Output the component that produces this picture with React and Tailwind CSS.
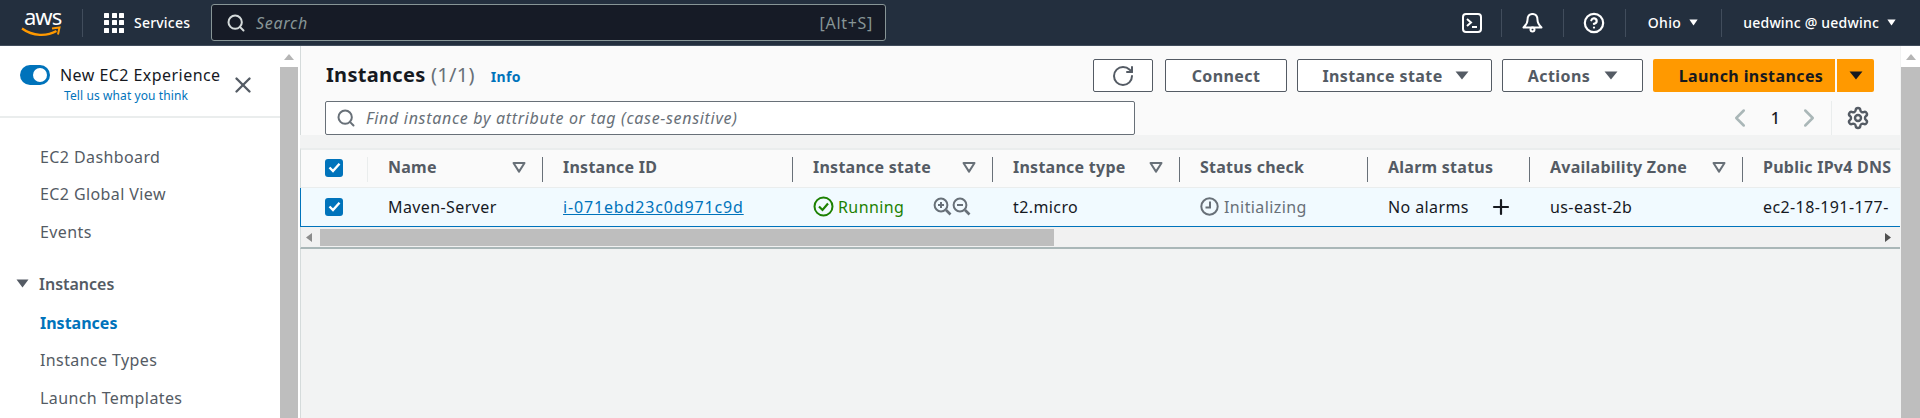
import React from "react";
import { CircleHelp, RotateCw, ChevronLeft, ChevronRight, Settings, Search, X, Plus } from "lucide-react";

const Caret = ({ className = "", w = 14, h = 9, color = "currentColor" }) => (
  <svg width={w} height={h} viewBox="0 0 13 8" preserveAspectRatio="none" className={className}>
    <path d="M0.5 0.5H12.5L6.5 7.5Z" fill={color} />
  </svg>
);

const Filter = () => (
  <svg width="14" height="11" viewBox="0 0 14 11">
    <path d="M1.5 1H12.5L7 9.6Z" fill="none" stroke="#687078" strokeWidth="2" strokeLinejoin="round" />
  </svg>
);

const Check = () => (
  <div className="w-[18px] h-[18px] rounded-[3px] bg-[#0073bb] flex items-center justify-center">
    <svg width="13" height="11" viewBox="0 0 13 11">
      <path d="M1.5 5.5L5 9L11.5 1.8" fill="none" stroke="#fff" strokeWidth="2.4" />
    </svg>
  </div>
);

const NavSep = () => <div className="w-px h-[28px] bg-[#414d5c]" />;

const Zoom = ({ plus }) => (
  <svg width="19" height="19" viewBox="0 0 19 19" fill="none" stroke="#687078" strokeWidth="2">
    <circle cx="8" cy="8" r="6.4" />
    <path d="M13 13L17.5 17.5" strokeWidth="2.6" />
    <path d="M5 8H11" />
    {plus && <path d="M8 5V11" />}
  </svg>
);

const Btn = ({ w, children, cls = "" }) => (
  <button className={`h-[33px] rounded-[2px] border border-[#545b64] bg-white flex items-center justify-center text-[#545b64] text-[16px] tracking-[0.4px] font-bold ${w} ${cls}`}>
    {children}
  </button>
);

const COLS = "grid grid-cols-[67px_175px_250px_200px_187px_188px_162px_213px_1fr]";

const Head = ({ label, filter, sep = "bg-[#687078]" }) => (
  <div className="relative h-full flex items-center pl-[20px] pr-[17px] justify-between text-[16px] tracking-[0.25px] font-bold text-[#545b64] whitespace-nowrap">
    <span className="-mt-[3px]">{label}</span>
    {filter && <span className="flex -mt-[2px]"><Filter /></span>}
    {sep && <span className={`absolute right-0 top-[7px] h-[25px] w-px ${sep}`} />}
  </div>
);

const Cell = ({ children, cls = "" }) => (
  <div className={`h-full flex items-center pl-[20px] text-[16px] tracking-[0.4px] text-[#16191f] whitespace-nowrap overflow-hidden ${cls}`}>{children}</div>
);

const SideItem = ({ children, cls = "" }) => (
  <div className={`h-[37.6px] flex items-center pl-[40px] text-[16px] tracking-[0.4px] text-[#545b64] ${cls}`}>{children}</div>
);

const VScroll = ({ w }) => (
  <div className={`${w} shrink-0 flex flex-col items-center`}>
    <div className="h-[21px] flex items-center justify-center">
      <svg width="10" height="6" viewBox="0 0 10 6"><path d="M0 6H10L5 0Z" fill="#b5b5b5" /></svg>
    </div>
    <div className="flex-1 w-full bg-[#bebebe]" />
  </div>
);

export default function App() {
  return (
    <div className="w-[1920px] h-[418px] overflow-hidden flex flex-col bg-white font-['Noto_Sans',sans-serif]">
      <header className="h-[46px] shrink-0 bg-[#232f3e] border-b border-[#414d5c] flex items-center text-white">
        <div className="w-[82px] shrink-0 flex justify-center">
          <div className="relative w-[40px] h-[32px] -mt-[3px]">
            <span className="absolute left-[3px] top-[-4px] text-[22px] leading-[30px] tracking-[-1px] text-white">aws</span>
            <svg width="40" height="12" viewBox="0 0 40 12" className="absolute left-[0px] top-[21px]">
              <path d="M1 2.5C12 10.5 26 10.5 35.5 5" fill="none" stroke="#f90" strokeWidth="2.2" />
              <path d="M31 2.5L38.5 1.5L37 8.5" fill="none" stroke="#f90" strokeWidth="2" />
            </svg>
          </div>
        </div>
        <NavSep />
        <div className="grid grid-cols-3 gap-[2.5px] ml-[21px] w-[20px]">
          {Array.from({ length: 9 }).map((_, i) => (
            <span key={i} className="w-[5px] h-[5px] bg-white rounded-[0.5px]" />
          ))}
        </div>
        <span className="ml-[10px] text-[14px] font-medium tracking-[0.2px] w-[77px]">Services</span>
        <div className="w-[675px] h-[37px] rounded-[3px] border border-[#879596] bg-[#161b26] flex items-center pl-[14px] pr-[12px]">
          <Search size={20} strokeWidth={2.4} className="text-[#d5dbdb]" />
          <span className="ml-[10px] text-[16px] tracking-[0.7px] italic text-[#879596]">Search</span>
          <span className="ml-auto text-[16px] tracking-[0.7px] text-[#879596]">[Alt+S]</span>
        </div>
        <div className="ml-auto flex items-center h-full">
          <svg width="20" height="20" viewBox="0 0 20 20" fill="none" stroke="#fff" strokeWidth="2" className="mr-[19px]">
            <rect x="1" y="1" width="18" height="18" rx="3" />
            <path d="M5 6L9 9.5L5 13" />
            <path d="M10 14H15" />
          </svg>
          <NavSep />
          <svg width="21" height="21" viewBox="0 0 21 21" fill="none" stroke="#fff" strokeWidth="2" className="mx-[20px]">
            <path d="M10.5 2C7 2 5.5 4.5 5.5 8C5.5 11.5 4 13 1.5 15.5H19.5C17 13 15.5 11.5 15.5 8C15.5 4.5 14 2 10.5 2Z" strokeLinejoin="round" />
            <path d="M10.5 1V2.5" />
            <circle cx="10.5" cy="17.5" r="2" />
          </svg>
          <NavSep />
          <CircleHelp size={22} strokeWidth={2.4} className="mx-[19.5px]" />
          <NavSep />
          <span className="ml-[22px] text-[14px] font-medium tracking-[0.35px]">Ohio</span>
          <Caret color="#fff" w={9} h={7} className="ml-[8px] mr-[23px]" />
          <NavSep />
          <span className="ml-[21px] text-[14px] font-medium tracking-[0.2px]">uedwinc @ uedwinc</span>
          <Caret color="#fff" w={9} h={7} className="ml-[8px] mr-[24px]" />
        </div>
      </header>

      <div className="flex-1 flex min-h-0">
        <aside className="w-[280px] shrink-0 bg-white">
          <div className="h-[72px] border-b-2 border-[#eaeded] relative">
            <div className="flex items-start pl-[20px] pt-[18px]">
              <div className="w-[30px] h-[20px] rounded-full bg-[#0073bb] relative mt-[1px]">
                <span className="absolute right-[3px] top-[3px] w-[14px] h-[14px] rounded-full bg-white" />
              </div>
              <div className="ml-[10px] flex flex-col">
                <span className="text-[16px] leading-[22px] tracking-[0.45px] text-[#16191f] whitespace-nowrap">New EC2 Experience</span>
                <span className="ml-[4px] mt-[1px] text-[12px] leading-[18px] tracking-[0.1px] text-[#0073bb] whitespace-nowrap">Tell us what you think</span>
              </div>
            </div>
            <X size={26} strokeWidth={2.2} className="absolute left-[230px] top-[26px] text-[#545b64]" />
          </div>
          <div className="pt-[20px]">
            <SideItem>EC2 Dashboard</SideItem>
            <SideItem>EC2 Global View</SideItem>
            <SideItem>Events</SideItem>
            <div className="h-[15px]" />
            <div className="h-[38px] flex items-center pl-[16px] text-[16px] font-semibold text-[#545b64] -mt-[1px] mb-[1px]">
              <Caret color="#545b64" w={13} h={9} />
              <span className="ml-[10px]">Instances</span>
            </div>
            <SideItem cls="font-bold !text-[#0073bb] !tracking-normal">Instances</SideItem>
            <SideItem>Instance Types</SideItem>
            <SideItem>Launch Templates</SideItem>
          </div>
        </aside>

        <VScroll w="w-[18px] mt-0" />
        <div className="w-[2px] shrink-0 bg-white" />

        <main className="flex-1 min-w-0 bg-[#f2f3f3] flex flex-col">
          <div className="bg-[#fafafa] border-l border-[#d5dbdb]">
            <div className="pl-[24px] pr-[26px] pt-[13px]">
              <div className="flex items-center h-[33px]">
                <h1 className="ml-[1px] text-[20px] tracking-[0.3px] font-bold text-[#16191f] -mt-[2px]">
                  Instances <span className="font-normal text-[#687078]">(1/1)</span>
                </h1>
                <span className="ml-[16px] text-[14px] tracking-[0.3px] font-bold text-[#0073bb] mt-[1px]">Info</span>
                <div className="ml-auto flex items-center">
                  <Btn w="w-[60px]"><RotateCw size={24} strokeWidth={2} /></Btn>
                  <Btn w="w-[122px]" cls="ml-[12px]">Connect</Btn>
                  <Btn w="w-[195px]" cls="ml-[10px] gap-[12px] pl-[2px]">Instance state <Caret color="#545b64" /></Btn>
                  <Btn w="w-[141px]" cls="ml-[10px] gap-[14px] pl-[1px]">Actions <Caret color="#545b64" /></Btn>
                  <button className="ml-[10px] w-[182px] h-[33px] rounded-l-[2px] bg-[#f90] text-[16px] tracking-[0.4px] font-bold text-[#16191f] pl-[14px]">Launch instances</button>
                  <button className="ml-[2px] w-[37px] h-[33px] rounded-r-[2px] bg-[#f90] flex items-center justify-center"><Caret color="#16191f" /></button>
                </div>
              </div>
              <div className="flex items-center h-[34px] mt-[9px]">
                <div className="w-[810px] h-[34px] rounded-[2px] border border-[#687078] bg-white flex items-center pl-[10px]">
                  <Search size={20} strokeWidth={2.4} className="text-[#687078]" />
                  <span className="ml-[10px] text-[16px] tracking-[0.68px] italic text-[#687078]">Find instance by attribute or tag (case-sensitive)</span>
                </div>
                <div className="ml-auto flex items-center h-full">
                  <ChevronLeft size={30} strokeWidth={2} className="text-[#aab7b8]" />
                  <span className="ml-[16px] text-[16px] font-medium text-[#16191f]">1</span>
                  <ChevronRight size={30} strokeWidth={2} className="ml-[14px] text-[#aab7b8]" />
                  <div className="ml-[7px] w-px h-full bg-[#eaeded]" />
                  <Settings size={24} strokeWidth={2.4} className="ml-[14px] mr-[4px] text-[#545b64]" />
                </div>
              </div>
            </div>
          </div>

          <div className="mt-[13px] border-t-2 border-[#eaeded] bg-[#fafafa] border-l border-l-[#d5dbdb]">
            <div className={`${COLS} h-[38px] border-b border-[#eaeded] overflow-hidden`}>
              <div className="relative h-full flex items-center pl-[24px]">
                <span className="-mt-[2px]"><Check /></span>
                <span className="absolute right-0 top-[7px] h-[25px] w-px bg-[#eaeded]" />
              </div>
              <Head label="Name" filter />
              <Head label="Instance ID" />
              <Head label="Instance state" filter />
              <Head label="Instance type" filter />
              <Head label="Status check" />
              <Head label="Alarm status" />
              <Head label="Availability Zone" filter />
              <Head label="Public IPv4 DNS" sep={null} />
            </div>
          </div>
          <div className={`${COLS} h-[39px] bg-[#f1faff] border-l border-b border-[#0073bb] overflow-hidden pb-[1px]`}>
            <div className="h-full flex items-center pl-[24px]"><Check /></div>
            <Cell>Maven-Server</Cell>
            <Cell><span className="text-[#0073bb] underline tracking-[0.85px]">i-071ebd23c0d971c9d</span></Cell>
            <Cell cls="relative">
              <svg width="21" height="21" viewBox="0 0 21 21" fill="none" stroke="#1d8102" strokeWidth="2">
                <circle cx="10.5" cy="10.5" r="9" />
                <path d="M6 10.5L9.5 14L15 7.5" strokeWidth="2.2" />
              </svg>
              <span className="ml-[4px] text-[#1d8102]">Running</span>
              <span className="ml-[29px] flex"><Zoom plus /><Zoom /></span>
            </Cell>
            <Cell>t2.micro</Cell>
            <Cell>
              <svg width="19" height="19" viewBox="0 0 19 19" fill="none" stroke="#687078" strokeWidth="2">
                <circle cx="9.5" cy="9.5" r="8.2" />
                <path d="M10 4.5V10.5H5.5" />
              </svg>
              <span className="ml-[5px] text-[#687078]">Initializing</span>
            </Cell>
            <Cell>
              No alarms
              <Plus size={24} strokeWidth={2.2} className="ml-[20px]" />
            </Cell>
            <Cell>us-east-2b</Cell>
            <Cell>ec2-18-191-177-</Cell>
          </div>
          <div className="h-[22px] bg-[#f1f1f1] border-l border-[#d5dbdb] border-b-2 border-b-[#aab7b8] flex items-start pt-[2px] relative">
            <svg width="6" height="9" viewBox="0 0 6 9" className="ml-[5px] mt-[4px]"><path d="M6 0V9L0 4.5Z" fill="#8c8c8c" /></svg>
            <div className="ml-[8px] w-[734px] h-[17px] bg-[#bebebe]" />
            <svg width="6" height="9" viewBox="0 0 6 9" className="ml-auto mr-[9px] mt-[4px]"><path d="M0 0V9L6 4.5Z" fill="#505050" /></svg>
          </div>
          <div className="flex-1 border-l border-[#d5dbdb]" />
        </main>

        <div className="w-px shrink-0 bg-[#f2f3f3]" />
        <VScroll w="w-[19px]" />
      </div>
    </div>
  );
}
